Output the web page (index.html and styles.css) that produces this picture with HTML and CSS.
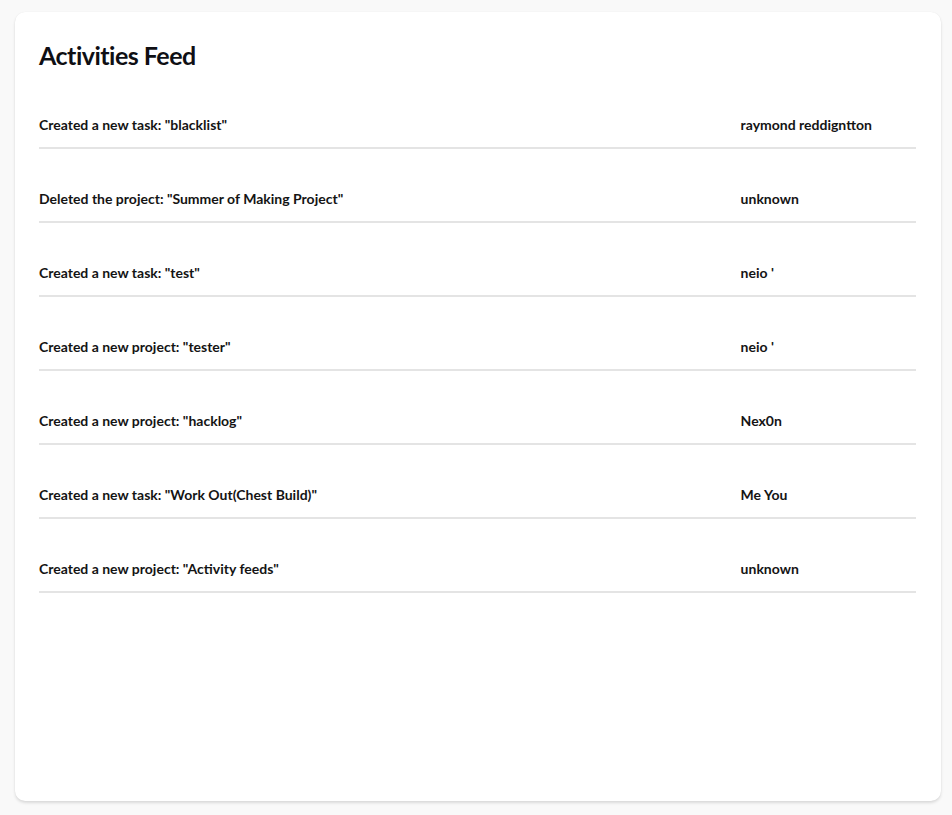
FILE: index.html
```html
<!DOCTYPE html>
<html>
<head>
<meta charset="utf-8">
<link rel="stylesheet" href="styles.css">
</head>
<body>
<div class="card">
  <h1 class="title">Activities Feed</h1>
  <div class="feed">
    <div class="row"><span class="act">Created a new task: "blacklist"</span><span class="user">raymond reddigntton</span></div>
    <div class="row"><span class="act">Deleted the project: "Summer of Making Project"</span><span class="user">unknown</span></div>
    <div class="row"><span class="act">Created a new task: "test"</span><span class="user">neio '</span></div>
    <div class="row"><span class="act">Created a new project: "tester"</span><span class="user">neio '</span></div>
    <div class="row"><span class="act">Created a new project: "hacklog"</span><span class="user">Nex0n</span></div>
    <div class="row"><span class="act">Created a new task: "Work Out(Chest Build)"</span><span class="user">Me You</span></div>
    <div class="row"><span class="act">Created a new project: "Activity feeds"</span><span class="user">unknown</span></div>
  </div>
</div>
</body>
</html>
```
FILE: styles.css
```css
html, body {
  margin: 0;
  padding: 0;
  background: #f9f9f9;
}
body {
  padding: 12px 11px 14px 15px;
  font-family: "Lato", "Open Sans", sans-serif;
  color: #141414;
}
.card {
  background: #ffffff;
  border-radius: 10px;
  box-shadow: 0 2px 3px rgba(0,0,0,0.12), 0 0 1px rgba(0,0,0,0.08);
  height: 789px;
  box-sizing: border-box;
  padding: 28px 24px 0 24px;
}
.title {
  margin: 0;
  font-size: 25px;
  line-height: 30px;
  font-weight: 700;
  letter-spacing: -0.5px;
  color: #0f0f14;
}
.feed {
  margin-top: 5px;
  margin-right: 1px;
}
.row {
  display: grid;
  grid-template-columns: 80% 20%;
  padding: 40px 0 12px 0;
  border-bottom: 2px solid #e4e4e4;
  font-size: 14px;
  line-height: 20px;
  font-weight: 700;
}
.act, .user {
  white-space: nowrap;
}
```
